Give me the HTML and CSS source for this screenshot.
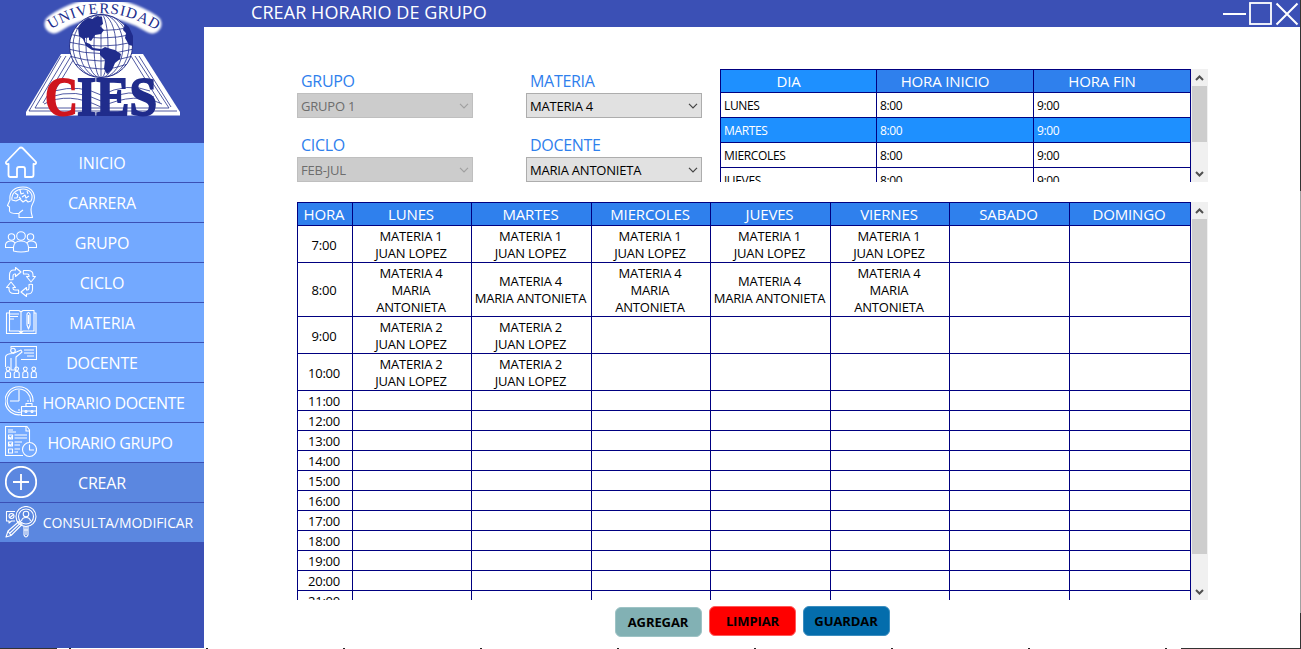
FILE: index.html
```html
<!DOCTYPE html>
<html lang="es">
<head>
<meta charset="utf-8">
<title>Crear horario de grupo</title>
<link rel="stylesheet" href="styles.css">
</head>
<body>
<div class="window">
  <aside class="sidebar">
    <svg class="logo" viewBox="0 0 204 143" width="204" height="143">
      <defs>
        <filter id="glow" filterUnits="userSpaceOnUse" x="30" y="-20" width="150" height="70"><feGaussianBlur stdDeviation="1.1"/></filter>
        <clipPath id="top"><rect x="0" y="2" width="204" height="141"/></clipPath>
        <clipPath id="ball"><circle cx="101" cy="46" r="31.5"/></clipPath>
        <path id="arc" d="M51 29.500Q101 -3 155 29.500"/>
      </defs>
      <path class="paper" d="M61 54H143L180 112V115.500H26V112Z"/>
      <g class="ink">
        <path d="M66 56L35 108H169L135 56M71 56L43 103M75 57L48 102M131 56L160 103M139 56L171 107M61 56L29 111H177"/>
        <path d="M44 104Q68 91 101 107Q135 91 162 104M50 97Q76 88 101 101Q130 87 154 97M54 91Q80 84 101 95Q128 82 150 91M101 76V112"/>
      </g>
      <g clip-path="url(#top)"><path class="halo" filter="url(#glow)" d="M54 24Q101 -8 152 24"/></g>
      <circle class="globe" cx="101" cy="46" r="31.500"/>
      <g class="ink" clip-path="url(#ball)">
        <ellipse cx="101" cy="46" rx="7" ry="32"/><ellipse cx="101" cy="46" rx="15" ry="32"/><ellipse cx="101" cy="46" rx="22" ry="32"/><ellipse cx="101" cy="46" rx="28" ry="32"/>
        <path d="M101 14V78M70 27Q101 34 132 27M68 34Q101 42 134 34M68 42Q101 50 134 42M68 49Q101 58 134 49M69 56Q101 66 133 56M75 64Q101 74 128 64"/>
      </g>
      <path class="land" d="M78 28l4-6 6-4 5 1 4-3 5 1 1 7-3 2 4 4-3 4-6 1-4 6-2-1 0-3-4 1 0 4 5 2 3 4 8 1-1 2-8-1-6-4-3-7-4-3zM100 50l5-3 6 2 4 1 6 4-1 5-5 4-3 7-5 4-3-5 1-9-5-5zM125 24l4 3 4 9 0 10-4-1-4-7 1-5-3-3z"/>
      <text class="arc-name"><textPath href="#arc" textLength="112">UNIVERSIDAD</textPath></text>
      <text class="cies cies-c" x="45" y="115" textLength="33" lengthAdjust="spacingAndGlyphs">C</text>
      <text class="cies" x="77" y="115" textLength="80" lengthAdjust="spacingAndGlyphs">IES</text>
    </svg>
    <nav class="menu">
      <a class="item"><svg class="icon bold" viewBox="0 0 32 32"><path d="M1 16L14 2.500Q16 .500 18 2.500L31 16Q31.500 18.500 28.500 18V29Q28.500 31 26.500 31H20V23Q20 21 18 21H14Q12 21 12 23V31H5.500Q3.500 31 3.500 29V18Q.500 18.500 1 16Z"/></svg><span>INICIO</span></a>
      <a class="item"><svg class="icon" viewBox="0 0 32 32"><path d="M14 31.500V27.500Q5 28 4.500 25V21L2.500 19.500 5 14C4 5 10 1 18 1C28 1 32 10 27.500 18C25 22 26 27 27.500 31.500ZM14 27L18 24"/><path d="M7 14C6 7 12 3 18 3C25 3 29 9 26 15L23 16 21 14 18 16 15 13 11 15ZM10 7L13 9 12 12M15 4L16 8 19 7M17 11L20 9 21 12 24 10M22 5L23 8M9 12H12M14 11L16 13"/></svg><span>CARRERA</span></a>
      <a class="item"><svg class="icon" viewBox="0 0 32 32"><circle cx="16" cy="10" r="4.300"/><circle cx="6.500" cy="11" r="3.200"/><circle cx="25.500" cy="11" r="3.200"/><path d="M8.500 25V21Q9 15 16 15Q23 15 23.500 21V25Q16 27 8.500 25ZM8 21.500H.500V19Q1 15 6 15Q9 15 10 17M24 21.500H31.500V19Q31 15 26 15Q23 15 22 17"/></svg><span>GRUPO</span></a>
      <a class="item"><svg class="icon" viewBox="0 0 32 32"><path id="cyc" d="M4.500 13.500V9Q4.500 4 9 4H10.500V1.500L16 6 10.500 10.500V8H9.500Q8 8 8 10V13.500Q6 14 4.500 13.500Z"/><use href="#cyc" transform="rotate(90 16 16)"/><use href="#cyc" transform="rotate(180 16 16)"/><use href="#cyc" transform="rotate(270 16 16)"/></svg><span>CICLO</span></a>
      <a class="item"><svg class="icon" viewBox="0 0 32 32"><path d="M4.500 4.500H14L16 6 18 4.500H29V25H18L16 27 14 25H4.500ZM4 7H1.500V27.500H31V7H29M16 6V26"/><path d="M5 8H14M5 10.500H13M5 13H9M22 8Q23.500 5 25 8V19L23.500 23 22 19ZM23.500 9V18"/></svg><span>MATERIA</span></a>
      <a class="item"><svg class="icon" viewBox="0 0 32 32"><path d="M6 2.500V.500H31.500V13.500H16M.500 21V11Q1 7.500 8 7.500L16 4 17 6 11 11V24H6V12M.500 12V19M19 4H29M19 7H29M22 10H29"/><circle cx="8" cy="4.500" r="2.300"/><path id="pupil" d="M.500 31.500V27.500Q.500 25.500 3 25.500Q5.500 25.500 5.500 27.500V31.500ZM3 25.500Q.800 24 1.200 22Q3 20 4.800 22Q5.200 24 3 25.500"/><use href="#pupil" x="8.700"/><use href="#pupil" x="17.300"/><use href="#pupil" x="25.800"/></svg><span>DOCENTE</span></a>
      <a class="item tight"><svg class="icon" viewBox="0 0 32 32"><path d="M17 28.500A14 14 0 1 1 28 16M17 26A11.700 11.700 0 1 1 25.500 16M14 4V15M5 15H14M14 23V25M22 15H24"/><path d="M16.500 20.500H31.500V29.500H16.500ZM21 20.500V17.500H27V20.500M16.500 25H31.500"/><circle cx="21" cy="25.500" r="1"/><circle cx="27" cy="25.500" r="1"/></svg><span>HORARIO DOCENTE</span></a>
      <a class="item tight group"><svg class="icon" viewBox="0 0 32 32"><path d="M18 29.500H.500V.500H22L24.500 4V16M21 1V5H24M3 4H8M3 6H11M3.500 9H7.500V13H3.500ZM3.500 16H7.500V20H3.500ZM3.500 23H7.500V27H3.500ZM9.500 9H22M9.500 12H22M9.500 16H17M9.500 19H15M9.500 23H15M9.500 26H13M4 11L5.500 12.500 8 9M4 18L5.500 19.500 8 16"/><circle cx="24.500" cy="23.500" r="7"/><path d="M24.500 18.500V24H29"/></svg><span>HORARIO GRUPO</span></a>
      <a class="item sub"><svg class="icon bold" viewBox="0 0 32 32"><circle cx="16" cy="16" r="15.200"/><path d="M16 8V24M8 16H24"/></svg><span>CREAR</span></a>
      <a class="item sub small"><svg class="icon" viewBox="0 0 32 32"><circle cx="21" cy="10.500" r="10"/><circle cx="21" cy="10.500" r="7.500"/><circle cx="21" cy="8" r="2.800"/><path d="M16.500 15Q17 11.500 21 11.500Q25 11.500 25.500 15M19 20V29Q21 33 23 29V20M19 24H23M21 20V29M10 5.500H1.500V15H4V17L6.500 15H10"/><circle cx="6.500" cy="10" r="2.500"/><path d="M1 31L3 25 14 15.500 17 18.500 6 29.500ZM3 25L6 29.500M5 27L15 17.500M5 11.500L8.500 8.500"/></svg><span>CONSULTA/MODIFICAR</span></a>
    </nav>
  </aside>
  <div class="main">
    <header class="titlebar">
      <h1>CREAR HORARIO DE GRUPO</h1>
      <svg class="controls" viewBox="0 0 78 27" width="78" height="27"><path class="c-line" d="M1 14H24"/><rect class="c-box" x="28" y="3" width="21" height="21"/><path class="c-x" d="M54.500 3.500L75.500 24.500M75.500 3.500L54.500 24.500"/></svg>
    </header>
    <main class="content">
      <section class="top">
        <div class="form">
          <div class="field"><label>GRUPO</label><div class="select off"><span>GRUPO 1</span><svg class="chev" viewBox="0 0 10 6"><path d="M1 .800L5 4.800 9 .800"/></svg></div></div>
          <div class="field"><label>MATERIA</label><div class="select"><span>MATERIA 4</span><svg class="chev" viewBox="0 0 10 6"><path d="M1 .800L5 4.800 9 .800"/></svg></div></div>
          <div class="field"><label>CICLO</label><div class="select off"><span>FEB-JUL</span><svg class="chev" viewBox="0 0 10 6"><path d="M1 .800L5 4.800 9 .800"/></svg></div></div>
          <div class="field"><label>DOCENTE</label><div class="select"><span>MARIA ANTONIETA</span><svg class="chev" viewBox="0 0 10 6"><path d="M1 .800L5 4.800 9 .800"/></svg></div></div>
        </div>
        <div class="pane days-pane">
          <table class="days">
            <colgroup><col class="d1"><col class="d2"><col class="d3"></colgroup>
            <tr><th class="picked">DIA</th><th>HORA INICIO</th><th>HORA FIN</th></tr>
            <tr><td>LUNES</td><td>8:00</td><td>9:00</td></tr>
            <tr class="picked"><td>MARTES</td><td>8:00</td><td>9:00</td></tr>
            <tr><td>MIERCOLES</td><td>8:00</td><td>9:00</td></tr>
            <tr><td>JUEVES</td><td>8:00</td><td>9:00</td></tr>
          </table>
          <div class="scroll"><svg class="arrow" viewBox="0 0 9 6"><path d="M1 5L4.500 1.500 8 5"/></svg><div class="thumb thumb-s"></div><svg class="arrow down" viewBox="0 0 9 6"><path d="M1 1L4.500 4.500 8 1"/></svg></div>
        </div>
      </section>
      <div class="pane week-pane">
        <table class="week">
          <colgroup><col class="w55"><col class="w119"><col class="w120"><col class="w119"><col class="w120"><col class="w119"><col class="w120"><col class="w121"></colgroup>
          <tr><th>HORA</th><th>LUNES</th><th>MARTES</th><th>MIERCOLES</th><th>JUEVES</th><th>VIERNES</th><th>SABADO</th><th>DOMINGO</th></tr>
          <tr class="two"><td>7:00</td><td>MATERIA 1<br>JUAN LOPEZ</td><td>MATERIA 1<br>JUAN LOPEZ</td><td>MATERIA 1<br>JUAN LOPEZ</td><td>MATERIA 1<br>JUAN LOPEZ</td><td>MATERIA 1<br>JUAN LOPEZ</td><td></td><td></td></tr>
          <tr class="three"><td>8:00</td><td>MATERIA 4<br>MARIA<br>ANTONIETA</td><td>MATERIA 4<br>MARIA ANTONIETA</td><td>MATERIA 4<br>MARIA<br>ANTONIETA</td><td>MATERIA 4<br>MARIA ANTONIETA</td><td>MATERIA 4<br>MARIA<br>ANTONIETA</td><td></td><td></td></tr>
          <tr class="two"><td>9:00</td><td>MATERIA 2<br>JUAN LOPEZ</td><td>MATERIA 2<br>JUAN LOPEZ</td><td></td><td></td><td></td><td></td><td></td></tr>
          <tr class="two"><td>10:00</td><td>MATERIA 2<br>JUAN LOPEZ</td><td>MATERIA 2<br>JUAN LOPEZ</td><td></td><td></td><td></td><td></td><td></td></tr>
          <tr><td>11:00</td><td></td><td></td><td></td><td></td><td></td><td></td><td></td></tr>
          <tr><td>12:00</td><td></td><td></td><td></td><td></td><td></td><td></td><td></td></tr>
          <tr><td>13:00</td><td></td><td></td><td></td><td></td><td></td><td></td><td></td></tr>
          <tr><td>14:00</td><td></td><td></td><td></td><td></td><td></td><td></td><td></td></tr>
          <tr><td>15:00</td><td></td><td></td><td></td><td></td><td></td><td></td><td></td></tr>
          <tr><td>16:00</td><td></td><td></td><td></td><td></td><td></td><td></td><td></td></tr>
          <tr><td>17:00</td><td></td><td></td><td></td><td></td><td></td><td></td><td></td></tr>
          <tr><td>18:00</td><td></td><td></td><td></td><td></td><td></td><td></td><td></td></tr>
          <tr><td>19:00</td><td></td><td></td><td></td><td></td><td></td><td></td><td></td></tr>
          <tr><td>20:00</td><td></td><td></td><td></td><td></td><td></td><td></td><td></td></tr>
          <tr><td>21:00</td><td></td><td></td><td></td><td></td><td></td><td></td><td></td></tr>
        </table>
        <div class="scroll"><svg class="arrow" viewBox="0 0 9 6"><path d="M1 5L4.500 1.500 8 5"/></svg><div class="thumb thumb-l"></div><svg class="arrow down" viewBox="0 0 9 6"><path d="M1 1L4.500 4.500 8 1"/></svg></div>
      </div>
      <div class="actions">
        <button class="btn add">AGREGAR</button><button class="btn clear">LIMPIAR</button><button class="btn save">GUARDAR</button>
      </div>
    </main>
  </div>
  <div class="edge-right"></div>
  <div class="edge-bottom"></div>
</div>
</body>
</html>
```
FILE: styles.css
```css
* { box-sizing: border-box; }
body {
  margin: 0;
  background: #fff;
  color: #000;
  font: 13px/17px "Open Sans", "Noto Sans", sans-serif;
  overflow: hidden;
}
.window { position: relative; display: flex; width: 1301px; height: 649px; }

/* Sidebar */
.sidebar { width: 204px; height: 648px; background: #3b50b5; }
.logo { display: block; }
.paper { fill: #fff; }
.ink { fill: none; stroke: #25308c; stroke-width: .8; }
.halo { fill: none; stroke: #fff; stroke-width: 19; stroke-linecap: round; }
.globe { fill: #fff; stroke: #25308c; stroke-width: 1; }
.land { fill: #202c8c; }
.arc-name { font: 15px "Liberation Serif", serif; fill: #202c8c; }
.cies { font: bold 54px "Liberation Serif", serif; fill: #202c8c; stroke: #202c8c; stroke-width: 1.8; }
.cies-c { fill: #cf151e; stroke: #cf151e; }
.item {
  display: flex;
  align-items: center;
  height: 40px;
  padding-left: 5px;
  background: #73a9ff;
  border-bottom: 1px solid #3b50b5;
  color: #fff;
  font-size: 16px;
  letter-spacing: -.15px;
}
.item.sub { background: #5b87e0; }
.item.tight { letter-spacing: -.4px; }
.item.small { font-size: 14px; letter-spacing: -.1px; }
.item span { flex: 1; margin-left: -32px; padding-top: 1px; text-align: center; white-space: nowrap; padding-right: 5px; }
.item.tight span, .item.small span { margin-left: 0; }
.item.tight span { padding-right: 14px; }
.item.group span { padding-right: 21px; }
.item.small span { padding: 0 5px 1px 0; }
.icon { flex: none; width: 32px; height: 32px; margin-bottom: 1px; fill: none; stroke: #fff; stroke-width: 1.1; stroke-linejoin: round; }
.icon.bold { stroke-width: 1.8; }

/* Title bar */
.main { width: 1096px; }
.titlebar {
  display: flex;
  justify-content: space-between;
  height: 27px;
  padding-left: 47px;
  background: #3b50b5;
  color: #fff;
}
h1 { margin: 0; font-size: 18px; font-weight: 400; line-height: 25px; letter-spacing: .08px; }
.controls { fill: none; stroke: #fff; }
.c-line { stroke-width: 2; }
.c-box { stroke-width: 1.8; }
.c-x { stroke-width: 2; }

/* Form */
.content { padding: 42px 0 0 93px; }
.top { display: flex; height: 133px; }
.form {
  display: grid;
  grid-template-columns: 176px 176px;
  grid-auto-rows: 64px;
  column-gap: 53px;
  width: 423px;
}
label { display: block; height: 24px; padding-left: 4px; color: #2f80ed; font-size: 16px; line-height: 24px; letter-spacing: -.3px; }
.select {
  display: flex;
  align-items: center;
  justify-content: space-between;
  height: 25px;
  padding: 1px 3px 0;
  background: #e1e1e1;
  border: 1px solid #adadad;
  letter-spacing: -.22px;
}
.select.off { background: #ccc; border-color: #bfbfbf; color: #6d6d6d; }
.chev { width: 10px; height: 6px; fill: none; stroke: #444; stroke-width: 1.2; }
.off .chev { stroke: #a0a0a0; }

/* Tables */
.pane { display: flex; overflow: hidden; width: 911px; }
.days-pane { width: 488px; height: 113px; }
.week-pane { height: 398px; }
table { flex: none; table-layout: fixed; border-spacing: 0; border-left: 1px solid #000080; border-top: 1px solid #000080; }
.days { width: 471px; height: 124px; }
.week { width: 894px; }
th, td { padding: 0; border-right: 1px solid #000080; border-bottom: 1px solid #000080; white-space: nowrap; }
th { height: 23px; padding-right: 2px; background: #2f80ed; color: #fff; font-size: 15px; font-weight: 400; line-height: 20px; letter-spacing: -.15px; }
.days th { padding-right: 20px; }
th.picked, .picked td { background: #1e90ff; color: #fff; }
.days td { height: 25px; padding-left: 3px; font-size: 12px; letter-spacing: -.35px; }
.week td { height: 20px; padding: 1px 2px 0 0; text-align: center; letter-spacing: -.2px; line-height: 17px; }
.week .two td { height: 37px; }
.week .three td { height: 54px; }
.week .two td:first-child { padding-top: 3px; }
.d1 { width: 156px; }
.d2, .d3 { width: 157px; }
.w55 { width: 55px; }
.w119 { width: 119px; }
.w120 { width: 120px; }
.w121 { width: 121px; }

.scroll { display: flex; flex-direction: column; width: 17px; background: #f0f0f0; padding-left: 1px; }
.arrow { flex: none; width: 9px; height: 6px; margin: 6px 0 5px 3px; fill: none; stroke: #505050; stroke-width: 2; }
.arrow.down { margin: auto 0 5px 3px; }
.thumb { width: 15px; background: #cdcdcd; }
.thumb-s { height: 56px; }
.thumb-l { height: 335px; }

/* Buttons */
.actions { display: flex; gap: 7px; padding: 6px 0 0 317.5px; }
.btn {
  width: 87px;
  height: 30px;
  padding: 0;
  border: 1px solid transparent;
  border-radius: 6px;
  color: #000;
  font: bold 13px/17px "Open Sans", "Noto Sans", sans-serif;
  letter-spacing: -.1px;
}
.add { margin-top: 1px; background: #82b1b4; border-color: #9ec3c5; }
.clear { padding-left: 1px; background: #f00; border-color: #ff5a5a; }
.save { background: #046dac; border-color: #3b8dbf; }

/* Outer frame */
.edge-right {
  position: absolute; right: 0; top: 0; width: 1px; height: 649px;
  background: linear-gradient(#333 191px, #a0a0a0 191px 613px, #333 613px);
}
.edge-bottom {
  position: absolute; left: 0; top: 648px; width: 1301px; height: 1px;
  background:
    linear-gradient(#333, #333) 0 0 / 57px 1px no-repeat,
    linear-gradient(#333, #333) 1181px 0 / 120px 1px no-repeat,
    repeating-linear-gradient(90deg, transparent 0 69px, #222 69px 71px, transparent 71px 137px);
}
```
